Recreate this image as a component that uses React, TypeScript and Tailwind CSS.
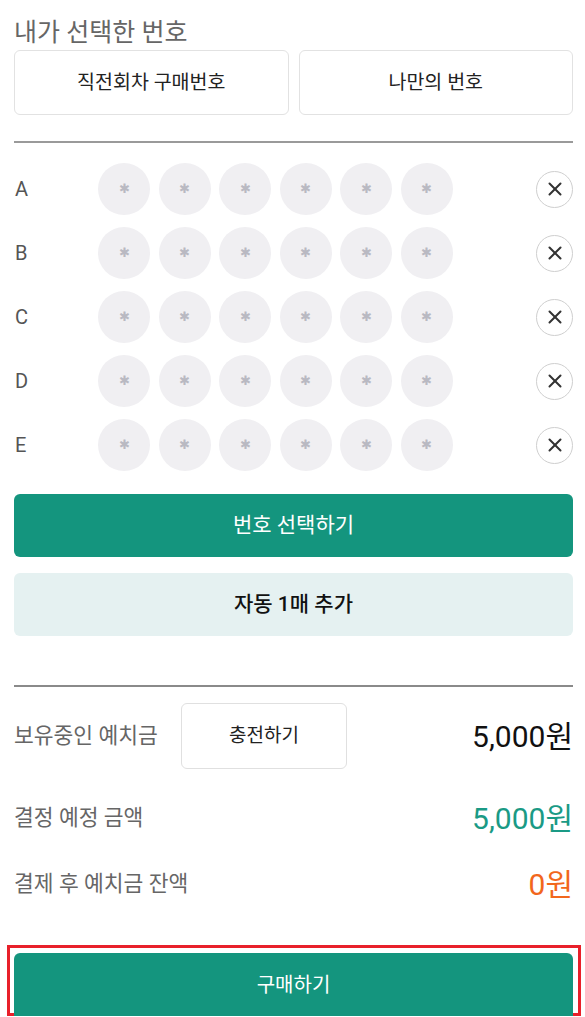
import { X } from "lucide-react";

const ROWS = ["A", "B", "C", "D", "E"];
const FONT = "font-['Roboto','Noto_Sans_CJK_KR',sans-serif]";

function NumberRow({ label }: { label: string }) {
  return (
    <div className="flex h-[52px] items-center">
      <span className="w-[84px] pl-px text-[20px] text-[#555]">{label}</span>
      <div className="flex gap-[8.6px]">
        {[0, 1, 2, 3, 4, 5].map((i) => (
          <div
            key={i}
            className="flex h-[52px] w-[52px] items-center justify-center rounded-full bg-[#f0eff2] text-[13px] text-[#b9b9c2]"
          >
            ✱
          </div>
        ))}
      </div>
      <button className="ml-auto flex h-[37px] w-[37px] items-center justify-center rounded-full border border-[#cfcfcf] bg-white text-[#333]">
        <X size={22} strokeWidth={2.2} />
      </button>
    </div>
  );
}

export default function App() {
  return (
    <div className={`min-h-[1017px] bg-white pl-[14px] pr-[12px] pt-[18px] ${FONT}`}>
      <h2 className="text-[25px] leading-[30px] text-[#666]">내가 선택한 번호</h2>

      <div className="mt-[2px] flex gap-[10px]">
        <button className="h-[65px] flex-1 rounded-[6px] border border-[#e2e2e2] bg-white text-[19.5px] text-[#222]">
          직전회차 구매번호
        </button>
        <button className="h-[65px] flex-1 rounded-[6px] border border-[#e2e2e2] bg-white text-[19.5px] text-[#222]">
          나만의 번호
        </button>
      </div>

      <div className="mt-[26px] h-[2px] bg-[#9a9a9a]" />

      <div className="mt-[20px] flex flex-col gap-[12px]">
        {ROWS.map((r) => (
          <NumberRow key={r} label={r} />
        ))}
      </div>

      <button className="mt-[23px] h-[63px] w-full rounded-[6px] bg-[#14957e] text-[21px] text-white">
        번호 선택하기
      </button>
      <button className="mt-[16px] h-[63px] w-full rounded-[6px] bg-[#e5f1f1] text-[21px] font-medium text-[#111]">
        자동 1매 추가
      </button>

      <div className="mt-[49px] h-[2px] bg-[#8a8a8a]" />

      <div className="mt-[16px] flex h-[66px] items-center">
        <span className="w-[167px] text-[21.5px] text-[#666]">보유중인 예치금</span>
        <button className="h-[66px] w-[166px] rounded-[6px] border border-[#e0e0e0] bg-white text-[19px] text-[#222]">
          충전하기
        </button>
        <span className="ml-auto text-[30px] text-[#111]">5,000원</span>
      </div>

      <div className="mt-[29px] flex h-[40px] items-center justify-between">
        <span className="text-[21.5px] text-[#666]">결정 예정 금액</span>
        <span className="text-[30px] text-[#1a9a85]">5,000원</span>
      </div>

      <div className="mt-[26px] flex h-[40px] items-center justify-between">
        <span className="text-[21.5px] text-[#666]">결제 후 예치금 잔액</span>
        <span className="text-[30px] text-[#f2671c]">0원</span>
      </div>

      <div className="-ml-[7px] -mr-[8px] mt-[41px] h-[71px] border-[3px] border-[#e8202a] pl-[4px] pr-[5px] pt-[5px]">
        <button className="h-[63px] w-full rounded-t-[6px] bg-[#14957e] text-[20px] text-white">
          구매하기
        </button>
      </div>
    </div>
  );
}
